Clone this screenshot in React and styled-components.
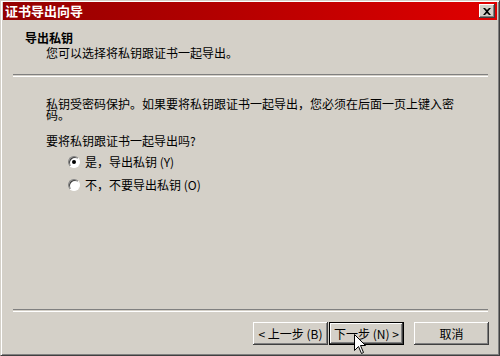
import styled, { createGlobalStyle } from "styled-components";

const GlobalStyle = createGlobalStyle`
  html, body {
    margin: 0;
    padding: 0;
    background: #d4d0c8;
  }
  body {
    font-family: "Noto Sans CJK SC", "Liberation Sans", sans-serif;
    font-size: 12px;
    color: #000;
  }
`;

const Window = styled.div`
  position: relative;
  width: 500px;
  height: 356px;
  box-sizing: border-box;
  display: flex;
  flex-direction: column;
  background: #d4d0c8;
  border-top: 1px solid #d4d0c8;
  border-left: 1px solid #d4d0c8;
  border-right: 1px solid #404040;
  border-bottom: 1px solid #404040;
  box-shadow: inset 1px 1px #ffffff, inset -1px -1px #808080;
  padding: 1px 2px 2px 2px;
  overflow: hidden;
`;

const TitleBar = styled.div`
  height: 18px;
  display: flex;
  align-items: center;
  justify-content: space-between;
  padding: 0 2px 0 2px;
  background: linear-gradient(90deg, #940000 0%, #b40000 45%, #e00000 100%);
`;

const Title = styled.span`
  color: #fff;
  font-weight: bold;
  font-size: 13px;
  line-height: 18px;
`;

const CloseButton = styled.div`
  width: 16px;
  height: 14px;
  box-sizing: border-box;
  display: flex;
  align-items: center;
  justify-content: center;
  background: #d4d0c8;
  box-shadow: inset -1px -1px #404040, inset 1px 1px #ffffff,
    inset -2px -2px #808080, inset 2px 2px #d4d0c8;
`;

const Header = styled.div`
  height: 54px;
  box-sizing: border-box;
  padding: 11px 0 0 22px;
  display: flex;
  flex-direction: column;
`;

const HeaderTitle = styled.div`
  font-weight: bold;
  line-height: 14px;
`;

const HeaderSub = styled.div`
  line-height: 14px;
  margin: 1px 0 0 21px;
`;

const Separator = styled.div`
  margin: 0 9px 0 10px;
  height: 1px;
  border-top: 1px solid #808080;
  border-bottom: 1px solid #ffffff;
`;

const Body = styled.div`
  flex: 1;
  padding: 21px 0 0 43px;
  display: flex;
  flex-direction: column;
`;

const Paragraph = styled.div`
  width: 410px;
  line-height: 11px;
`;

const Question = styled.div`
  margin-top: 15px;
  line-height: 12px;
`;

const RadioRow = styled.label`
  display: flex;
  align-items: center;
  height: 16px;
  margin: 7px 0 0 22px;
  gap: 5px;
  line-height: 16px;
`;

const RadioCircle = styled.span`
  width: 12px;
  height: 12px;
  box-sizing: border-box;
  border-radius: 50%;
  background: #fff;
  border: 1px solid;
  border-color: #808080 #ffffff #ffffff #808080;
  box-shadow: inset 1px 1px #404040;
  display: flex;
  align-items: center;
  justify-content: center;

  &::after {
    content: "";
    width: 4px;
    height: 4px;
    border-radius: 50%;
    background: ${(p) => (p.$checked ? "#000" : "transparent")};
  }
`;

const Footer = styled.div`
  display: flex;
  justify-content: flex-end;
  align-items: flex-start;
  height: 41px;
  box-sizing: border-box;
  padding: 10px 8px 0 0;
`;

const Button = styled.div`
  width: 75px;
  height: 23px;
  box-sizing: border-box;
  display: flex;
  align-items: center;
  justify-content: center;
  background: #d4d0c8;
  margin-left: ${(p) => p.$gap || 0}px;
  box-shadow: ${(p) =>
    p.$default
      ? "inset 0 0 0 1px #000, inset -2px -2px #404040, inset 2px 2px #ffffff, inset -3px -3px #808080"
      : "inset -1px -1px #404040, inset 1px 1px #ffffff, inset -2px -2px #808080, inset 2px 2px #d4d0c8"};
  line-height: 12px;
  white-space: pre;
`;

const Cursor = styled.svg`
  position: absolute;
  left: 353px;
  top: 333px;
`;

export default function App() {
  return (
    <>
      <GlobalStyle />
      <Window>
        <TitleBar>
          <Title>证书导出向导</Title>
          <CloseButton>
            <svg width="8" height="7" viewBox="0 0 8 7">
              <path
                d="M0 0h2l2 2 2-2h2L5 3.5 8 7H6L4 5 2 7H0l3-3.5z"
                fill="#000"
              />
            </svg>
          </CloseButton>
        </TitleBar>
        <Header>
          <HeaderTitle>导出私钥</HeaderTitle>
          <HeaderSub>您可以选择将私钥跟证书一起导出。</HeaderSub>
        </Header>
        <Separator />
        <Body>
          <Paragraph>
            私钥受密码保护。如果要将私钥跟证书一起导出，您必须在后面一页上键入密码。
          </Paragraph>
          <Question>要将私钥跟证书一起导出吗?</Question>
          <RadioRow>
            <RadioCircle $checked />
            <span>是，导出私钥 (Y)</span>
          </RadioRow>
          <RadioRow>
            <RadioCircle />
            <span>不，不要导出私钥 (O)</span>
          </RadioRow>
        </Body>
        <Separator />
        <Footer>
          <Button>{"< 上一步 (B)"}</Button>
          <Button $default $gap={1}>
            {"下一步 (N) >"}
          </Button>
          <Button $gap={10}>取消</Button>
        </Footer>
        <Cursor width="13" height="21" viewBox="0 0 13 21">
          <path
            d="M0.5 0.5 L0.5 16.5 L4.5 12.5 L7.5 19.5 L9.5 18.5 L6.5 11.5 L11.5 11.5 Z"
            fill="#fff"
            stroke="#000"
            strokeWidth="1"
          />
        </Cursor>
      </Window>
    </>
  );
}
